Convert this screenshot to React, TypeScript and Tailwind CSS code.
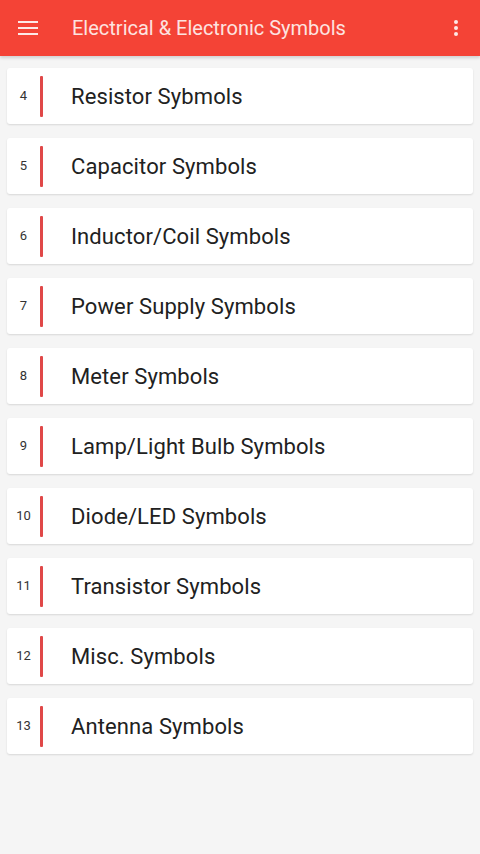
import React from "react";

const items = [
  { n: 4, t: "Resistor Sybmols" },
  { n: 5, t: "Capacitor Symbols" },
  { n: 6, t: "Inductor/Coil Symbols" },
  { n: 7, t: "Power Supply Symbols" },
  { n: 8, t: "Meter Symbols" },
  { n: 9, t: "Lamp/Light Bulb Symbols" },
  { n: 10, t: "Diode/LED Symbols" },
  { n: 11, t: "Transistor Symbols" },
  { n: 12, t: "Misc. Symbols" },
  { n: 13, t: "Antenna Symbols" },
];

export default function App() {
  return (
    <div className="w-[480px] h-[854px] bg-[#f5f5f5] overflow-hidden" style={{ fontFamily: "Roboto, 'Noto Sans', sans-serif" }}>
      <div className="h-[56px] bg-[#f44336] flex items-center shadow-[0_2px_3px_rgba(0,0,0,0.15)]">
        <div className="w-[72px] flex items-center pl-[18px]">
          <svg width="20" height="14" viewBox="0 0 20 14">
            <rect x="0" y="0" width="20" height="2" fill="#fde8e6" />
            <rect x="0" y="6" width="20" height="2" fill="#fde8e6" />
            <rect x="0" y="12" width="20" height="2" fill="#fde8e6" />
          </svg>
        </div>
        <div className="flex-1 text-[20px] text-[#fde3e0] tracking-[0px]">Electrical &amp; Electronic Symbols</div>
        <div className="w-[44px] flex justify-center pr-[4px]">
          <svg width="4" height="16" viewBox="0 0 4 16">
            <circle cx="2" cy="2" r="2" fill="#fde8e6" />
            <circle cx="2" cy="8" r="2" fill="#fde8e6" />
            <circle cx="2" cy="14" r="2" fill="#fde8e6" />
          </svg>
        </div>
      </div>
      <div className="flex flex-col gap-[14px] px-[7px] pt-[12px]">
        {items.map((it) => (
          <div key={it.n} className="h-[56px] bg-white rounded-[3px] shadow-[0_1px_2px_rgba(0,0,0,0.12)] flex items-center">
            <div className="w-[33px] text-[13px] text-[#333] text-center">{it.n}</div>
            <div className="w-[3px] h-[41px] bg-[#e04848] rounded-[1px]" />
            <div className="ml-[28px] text-[22px] text-[#212121] tracking-[0.1px]">{it.t}</div>
          </div>
        ))}
      </div>
    </div>
  );
}
